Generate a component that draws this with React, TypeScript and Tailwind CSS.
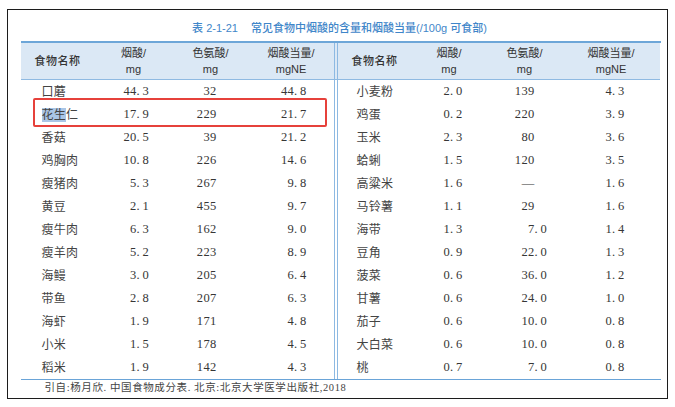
const leftRows: [string, string, string, string][] = [
  ["口蘑", "44.3", "32", "44.8"],
  ["花生仁", "17.9", "229", "21.7"],
  ["香菇", "20.5", "39", "21.2"],
  ["鸡胸肉", "10.8", "226", "14.6"],
  ["瘦猪肉", "5.3", "267", "9.8"],
  ["黄豆", "2.1", "455", "9.7"],
  ["瘦牛肉", "6.3", "162", "9.0"],
  ["瘦羊肉", "5.2", "223", "8.9"],
  ["海鳗", "3.0", "205", "6.4"],
  ["带鱼", "2.8", "207", "6.3"],
  ["海虾", "1.9", "171", "4.8"],
  ["小米", "1.5", "178", "4.5"],
  ["稻米", "1.9", "142", "4.3"],
];

const rightRows: [string, string, string, string][] = [
  ["小麦粉", "2.0", "139", "4.3"],
  ["鸡蛋", "0.2", "220", "3.9"],
  ["玉米", "2.3", "80", "3.6"],
  ["蛤蜊", "1.5", "120", "3.5"],
  ["高粱米", "1.6", "—", "1.6"],
  ["马铃薯", "1.1", "29", "1.6"],
  ["海带", "1.3", "7.0", "1.4"],
  ["豆角", "0.9", "22.0", "1.3"],
  ["菠菜", "0.6", "36.0", "1.2"],
  ["甘薯", "0.6", "24.0", "1.0"],
  ["茄子", "0.6", "10.0", "0.8"],
  ["大白菜", "0.6", "10.0", "0.8"],
  ["桃", "0.7", "7.0", "0.8"],
];

const sans = { fontFamily: '"Liberation Sans", "Noto Sans CJK SC", sans-serif' };
const serif = { fontFamily: '"Liberation Serif", "Noto Sans CJK SC", serif' };

// decimal-aligned number: integer part right-aligned, fraction left-aligned
function Num({ v, intW, fracW }: { v: string; intW: string; fracW: string }) {
  const [i, f] = v.split(".");
  return (
    <div className="flex items-baseline">
      <span className={`${intW} text-right`}>{i}</span>
      <span className={`${fracW} text-left`}>
        {f !== undefined && (
          <>
            .<span className="pl-[2.5px]">{f}</span>
          </>
        )}
      </span>
    </div>
  );
}

function Header({ widths }: { widths: string[] }) {
  const cols = [
    ["烟酸/", "mg"],
    ["色氨酸/", "mg"],
    ["烟酸当量/", "mgNE"],
  ];
  return (
    <div className="flex h-[37px] bg-[#dbe8f5] border-b border-[#8fbae2] text-[11px] text-[#333]" style={sans}>
      <div className={`${widths[0]} flex items-center justify-center font-medium tracking-[0.5px]`}>食物名称</div>
      {cols.map((c, idx) => (
        <div key={idx} className={`${widths[idx + 1]} flex flex-col items-center justify-center leading-[16px]`}>
          <span>{c[0]}</span>
          <span>{c[1]}</span>
        </div>
      ))}
    </div>
  );
}

export default function App() {
  const lw = ["w-[74px]", "w-[78px]", "w-[76px]", "w-[85px]"];
  const rw = ["w-[74px]", "w-[75px]", "w-[76px]", "w-[97px]"];

  return (
    <div className="w-[675px] h-[407px] bg-white pt-[9px] pl-[7px]">
      <div className="w-[661px] h-[390px] border-[1.5px] border-[#1c1c1c] pl-[12.5px] pr-[6.5px] flex flex-col">
        {/* Title */}
        <div className="h-[31.5px] flex items-end justify-center pb-[5px] pr-[2px] text-[11px] text-[#3f86c9] font-medium" style={sans}>
          <span>表 2-1-21</span>
          <span className="ml-[13px]">常见食物中烟酸的含量和烟酸当量(/100g 可食部)</span>
        </div>

        {/* Table */}
        <div className="border-t-2 border-[#6da6d8] border-b-[1.5px] border-b-[#6aa4d8] flex">
          {/* left half */}
          <div className="w-[313px]">
            <Header widths={lw} />
            <div className="text-[12.5px] text-[#363636] tracking-[0.3px]" style={serif}>
              {leftRows.map((r, idx) => (
                <div key={idx} className="relative flex h-[23px] items-center">
                  <div className={`${lw[0]} pl-[21px] text-[12px] text-[#444]`}>
                    {idx === 1 ? (
                      <>
                        <span className="bg-[#aac6e6]">花生</span>仁
                      </>
                    ) : (
                      r[0]
                    )}
                  </div>
                  <div className={`${lw[1]} flex justify-center`}>
                    <Num v={r[1]} intW="w-[22px]" fracW="w-[16px]" />
                  </div>
                  <div className={`${lw[2]} flex justify-center`}>
                    <Num v={r[2]} intW="w-[24px]" fracW="w-[12px]" />
                  </div>
                  <div className={`${lw[3]} flex justify-center`}>
                    <Num v={r[3]} intW="w-[22px]" fracW="w-[16px]" />
                  </div>
                  {idx === 1 && (
                    <div className="absolute left-[12px] top-[-5px] w-[294px] h-[29px] border-2 border-[#e6413b] rounded-[2px]" />
                  )}
                </div>
              ))}
            </div>
          </div>

          {/* double divider */}
          <div className="w-[4px] border-x border-[#8db9e2] flex flex-col">
            <div className="h-[37px] bg-[#dbe8f5] border-b border-[#8fbae2]" />
          </div>

          {/* right half */}
          <div className="w-[322px]">
            <Header widths={rw} />
            <div className="text-[12.5px] text-[#363636] tracking-[0.3px]" style={serif}>
              {rightRows.map((r, idx) => (
                <div key={idx} className="flex h-[23px] items-center">
                  <div className={`${rw[0]} pl-[19px] text-[12px] text-[#444]`}>{r[0]}</div>
                  <div className={`${rw[1]} flex justify-center`}>
                    <Num v={r[1]} intW="w-[18px]" fracW="w-[16px]" />
                  </div>
                  <div className={`${rw[2]} flex justify-center`}>
                    <Num v={r[2]} intW="w-[32px]" fracW="w-[12px]" />
                  </div>
                  <div className={`${rw[3]} flex justify-center`}>
                    <Num v={r[3]} intW="w-[18px]" fracW="w-[16px]" />
                  </div>
                </div>
              ))}
            </div>
          </div>
        </div>

        {/* Source */}
        <div className="flex-1 flex items-center pl-[24px] pb-[2px] text-[10.5px] text-[#444] tracking-[0.6px]" style={serif}>
          引自:杨月欣. 中国食物成分表. 北京:北京大学医学出版社,2018
        </div>
      </div>
    </div>
  );
}
